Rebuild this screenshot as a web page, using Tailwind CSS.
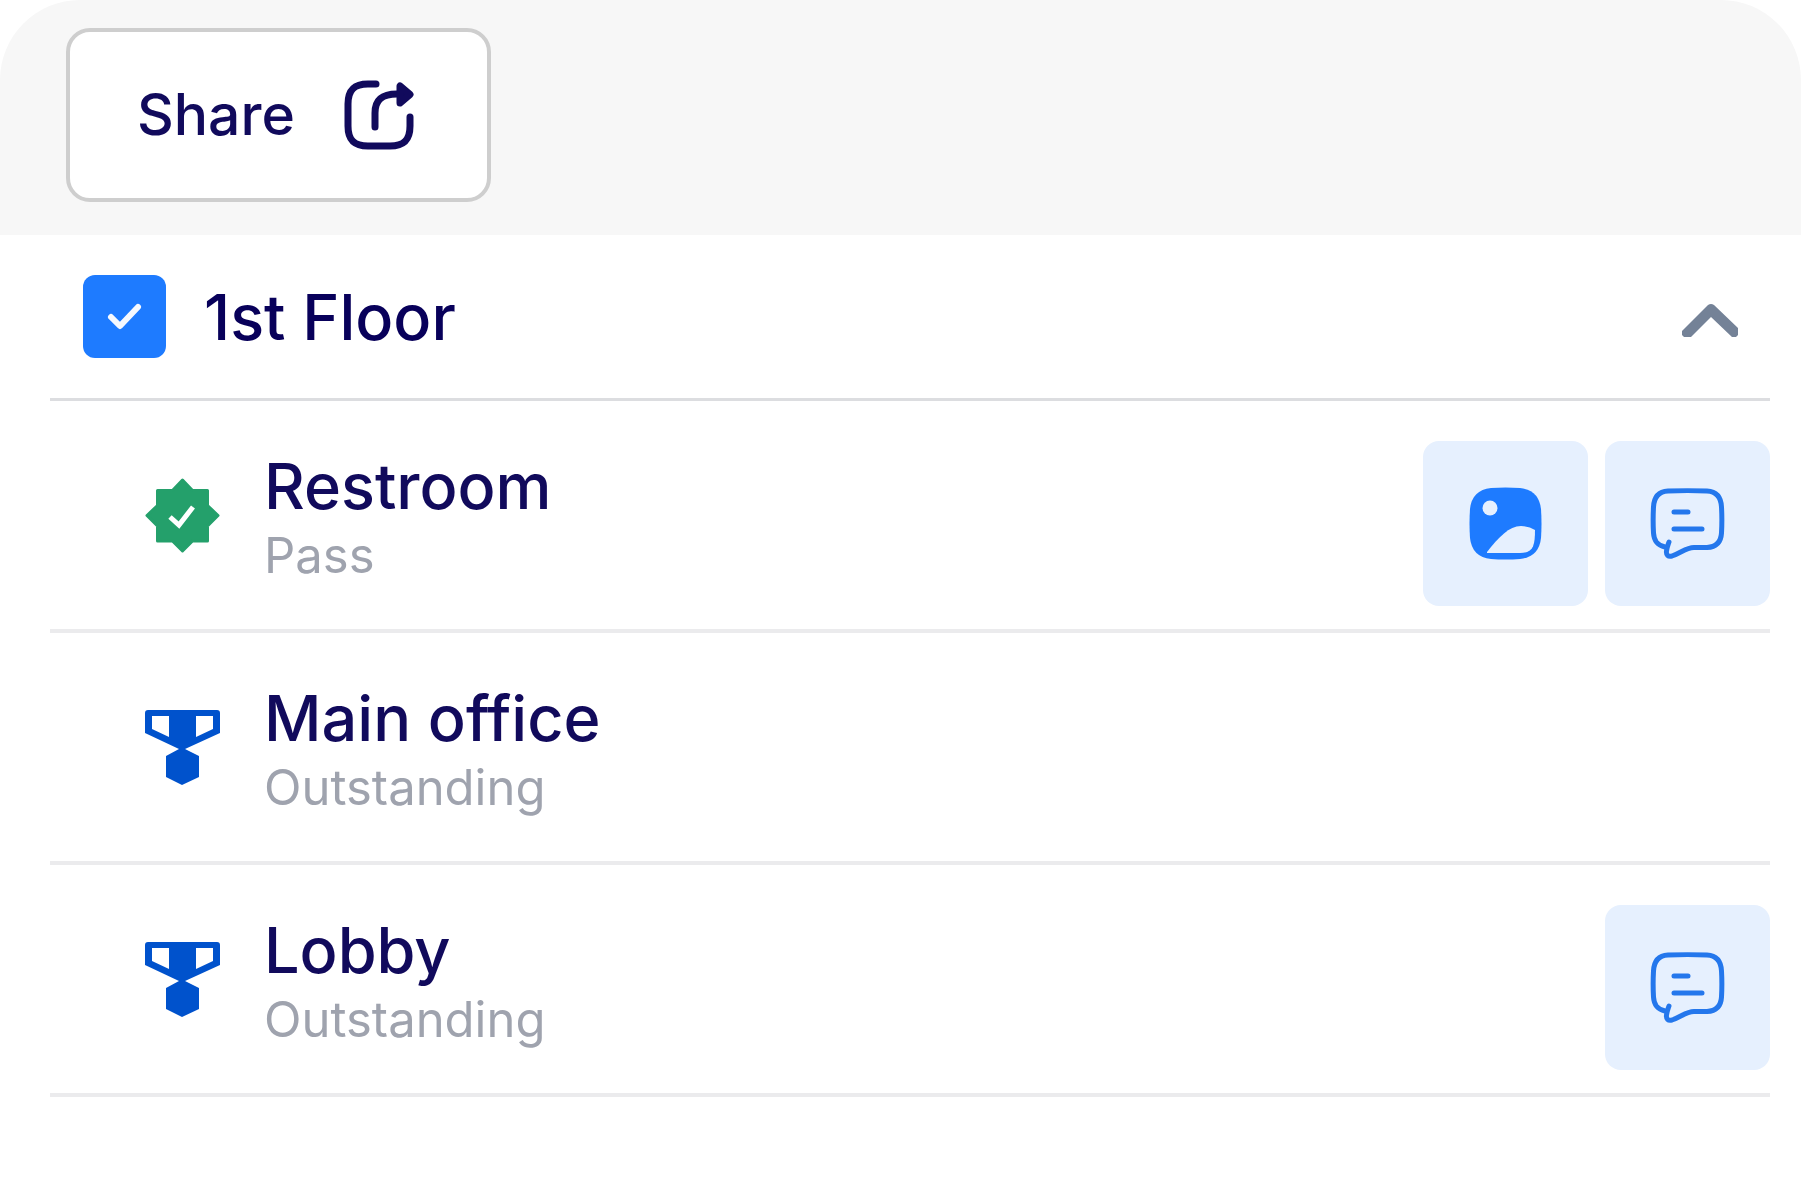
<!DOCTYPE html>
<html lang="en">
<head>
  <meta charset="UTF-8" />
  <meta name="viewport" content="width=device-width, initial-scale=1.0" />
  <title>Inspection - 1st Floor</title>
  <script src="https://cdn.jsdelivr.net/npm/@tailwindcss/browser@4"></script>
</head>
<body class="bg-white font-['Inter',sans-serif] text-[#110a5c]">

  <!-- Shared icons -->
  <svg class="hidden">
    <symbol id="medal" viewBox="0 0 75 75">
      <path fill="#0052cc" fill-rule="evenodd" d="M3 0H72Q75 0 75 3V23L40 39L54 46V67L37 75L21 67V46L34 39L0 23V3Q0 0 3 0ZM7 6V19L24 27V6ZM51 6V27L68 19V6Z" />
    </symbol>
    <symbol id="note" viewBox="0 0 75 75">
      <g fill="none" stroke="#2477ec" stroke-width="5" stroke-linecap="round" stroke-linejoin="round">
        <path d="M15 61C7 59 4 55 3.500 47C3 38 3 30 3.500 21C4 11 9 5.500 18 5C31 4.500 44 4.500 57 5C66 5.500 71 11 71.500 21C72 30 72 38 71.500 47C71 56 66 61 57 61.500H44C36 61.500 31 67 22 70C18 71 16 69 16.500 65C17 61 18 59 19 56" />
        <path d="M24 26H38M24 43H52" />
      </g>
    </symbol>
  </svg>

  <!-- Toolbar -->
  <header class="flex rounded-t-[80px] bg-[#f7f7f7] pt-7 pb-[33px] pl-[66px]">
    <button class="flex h-[174px] items-center gap-[49px] rounded-3xl border-4 border-[#cecece] bg-white pr-[73px] pl-[67px] text-[57px] leading-[64px] font-medium">
      Share
      <svg class="size-[70px]" viewBox="0 0 70 70" fill="none" stroke="currentColor" stroke-width="7" stroke-linecap="round" stroke-linejoin="round">
        <path d="M32 4H24C10 4 4 10 4 24V46C4 60 10 66 24 66H46C60 66 66 60 66 46V37" />
        <path d="M31 47V33C31 20 38 14 53 14" />
        <path fill="currentColor" d="M56 6V23L66 14.500Z" />
      </svg>
    </button>
  </header>

  <main class="pr-[31px] pl-[50px]">
    <!-- Section header -->
    <div class="flex h-[166px] items-center justify-between border-b-[3px] border-[#dcdde0] pr-8 pl-[33px]">
      <div class="flex items-center gap-[38px]">
        <div class="relative size-[83px]">
          <input id="floor" type="checkbox" checked class="block size-full appearance-none rounded-xl bg-[#1e7bff]" />
          <svg class="pointer-events-none absolute inset-0" viewBox="0 0 83 83" fill="none" stroke="#f5f9ff" stroke-width="6" stroke-linecap="round" stroke-linejoin="round">
            <path d="M28 42L37 51L55 32" />
          </svg>
        </div>
        <label for="floor" class="text-[63px] leading-[72px] font-medium text-[#08005a]">1st Floor</label>
      </div>
      <button aria-label="Collapse">
        <svg class="h-10 w-14" viewBox="0 -7 56 40">
          <path fill="#748297" d="M26 1Q29 -1 32 1L56 24V31L54 33H50L29 13L9 33H2L0 31V27Z" />
        </svg>
      </button>
    </div>

    <!-- Items -->
    <ul>
      <li class="flex min-h-[232px] items-start border-b-4 border-[#ebebed] pt-10">
        <svg class="mt-[37px] ml-[95px] size-[75px]" viewBox="0 0 75 75">
          <path fill="#24a06b" stroke="#24a06b" stroke-width="3" stroke-linejoin="round" d="M37.500 2L47.500 12.500H62.500V27.500L73 37.500L62.500 48V63H47.500L37.500 73L27.500 63H12.500V48L2 37.500L12.500 27.500V12.500H27.500Z" />
          <path fill="none" stroke="#fff" stroke-width="5" d="M25 39L34 47L48 29" />
        </svg>
        <div class="mt-[9px] ml-11 grow">
          <h2 class="text-[63px] leading-[72px] font-medium">Restroom</h2>
          <p class="text-[49px] leading-[68px] text-[#9fa3ae]">Pass</p>
        </div>
        <div class="flex gap-[17px]">
          <button aria-label="Photos" class="flex size-[165px] items-center justify-center rounded-2xl bg-[#e6f0fe]">
            <svg class="size-[73px]" viewBox="0 0 73 73">
              <path fill="#1e7bff" d="M22 1Q36.500 0 51 1Q70 3 72 22Q73 36.500 72 51Q70 70 51 72Q36.500 73 22 72Q3 70 1 51Q0 36.500 1 22Q3 3 22 1Z" />
              <circle cx="21" cy="21" r="7.500" fill="#e6f0fe" />
              <path fill="#e6f0fe" d="M18 65C30 50 40 39 52 39Q60 39 66 43C66 59 64 66 51 66H18Z" />
            </svg>
          </button>
          <button aria-label="Notes" class="flex size-[165px] items-center justify-center rounded-2xl bg-[#e6f0fe]">
            <svg class="size-[75px]"><use href="#note" /></svg>
          </button>
        </div>
      </li>

      <li class="flex min-h-[232px] items-start border-b-4 border-[#ebebed] pt-10">
        <svg class="mt-[37px] ml-[95px] size-[75px]"><use href="#medal" /></svg>
        <div class="mt-[9px] ml-11 grow">
          <h2 class="text-[63px] leading-[72px] font-medium">Main office</h2>
          <p class="text-[49px] leading-[68px] text-[#9fa3ae]">Outstanding</p>
        </div>
      </li>

      <li class="flex min-h-[232px] items-start border-b-4 border-[#ebebed] pt-10">
        <svg class="mt-[37px] ml-[95px] size-[75px]"><use href="#medal" /></svg>
        <div class="mt-[9px] ml-11 grow">
          <h2 class="text-[63px] leading-[72px] font-medium">Lobby</h2>
          <p class="text-[49px] leading-[68px] text-[#9fa3ae]">Outstanding</p>
        </div>
        <button aria-label="Notes" class="flex size-[165px] items-center justify-center rounded-2xl bg-[#e6f0fe]">
          <svg class="size-[75px]"><use href="#note" /></svg>
        </button>
      </li>
    </ul>
  </main>

</body>
</html>
